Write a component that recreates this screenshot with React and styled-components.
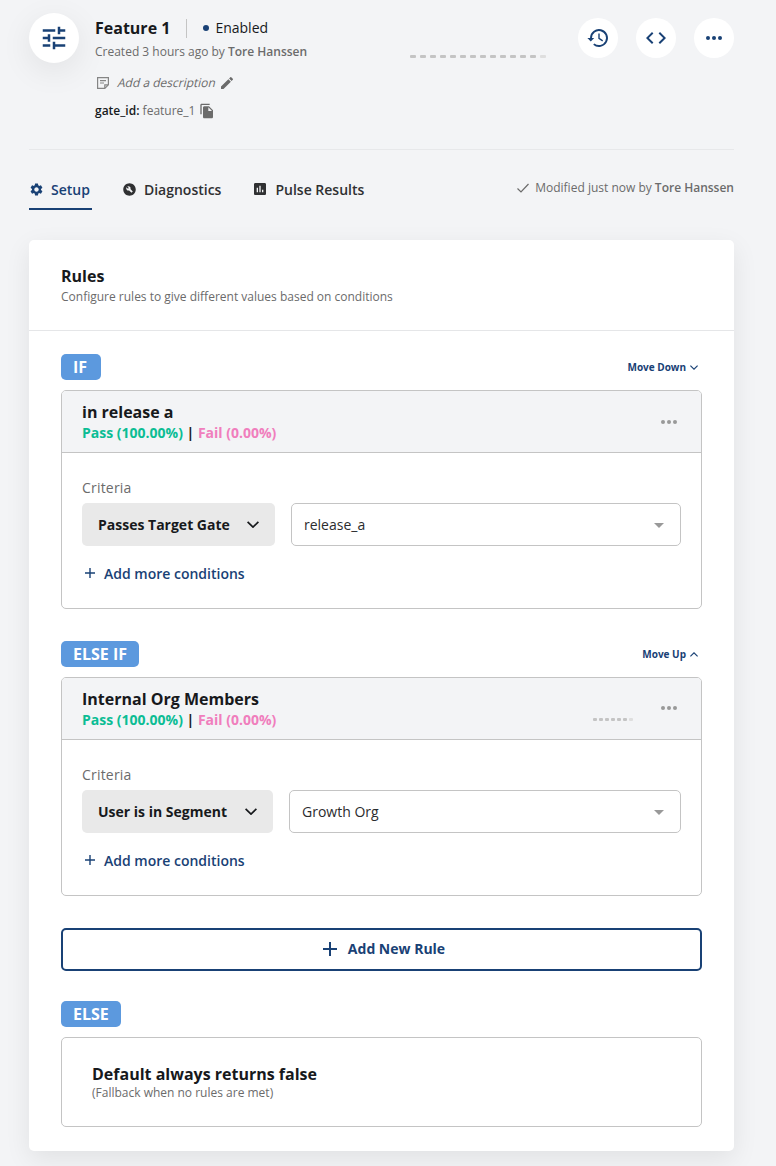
import React from 'react'
import styled, { createGlobalStyle } from 'styled-components'
import {
  MdTune,
  MdCode,
  MdEdit,
  MdFileCopy,
  MdSettings,
  MdBuildCircle,
  MdInsertChart,
  MdArrowDropDown,
} from 'react-icons/md'

const navy = '#194175'
const ink = '#17191c'
const muted = '#6b6b6b'
const line = '#c4c4c4'

const GlobalStyle = createGlobalStyle`
  * {
    box-sizing: border-box;
  }

  body {
    margin: 0;
    background: #f3f4f6;
    color: ${ink};
    font-family: 'Open Sans', sans-serif;
    font-size: 14px;
  }

  button {
    border: 0;
    padding: 0;
    background: none;
    color: inherit;
    font: inherit;
  }

  svg {
    display: block;
    flex: none;
  }
`

const Page = styled.main`
  height: 1166px;
  overflow: hidden;
  padding: 13px 42px 0 29px;
`

const Header = styled.header`
  display: flex;
  align-items: flex-start;
  height: 137px;
  border-bottom: 1px solid #e7e8ea;
`

const Avatar = styled.div`
  display: flex;
  align-items: center;
  justify-content: center;
  width: 50px;
  height: 50px;
  margin-right: 16px;
  border-radius: 50%;
  background: #fff;
  color: ${navy};
  box-shadow: 0 8px 32px rgba(0, 0, 0, 0.08);
`

const Info = styled.div`
  display: flex;
  flex-direction: column;
  flex: 1;
  padding-top: 3px;
`

const TitleRow = styled.div`
  display: flex;
  align-items: center;
  height: 24px;
`

const Title = styled.h1`
  margin: 0;
  font-size: 16px;
  font-weight: 700;
  line-height: 24px;
`

const Status = styled.div`
  display: flex;
  align-items: center;
  height: 19px;
  margin-left: 16px;
  padding-left: 16px;
  border-left: 1px solid ${line};
  line-height: 18px;

  &::before {
    content: '';
    width: 6px;
    height: 6px;
    margin-right: 6px;
    border-radius: 50%;
    background: ${navy};
  }
`

const Meta = styled.div`
  display: flex;
  align-items: center;
  height: 20px;
  margin-top: ${({ $top }) => $top || 0}px;
  padding-left: ${({ $indent }) => $indent || 0}px;
  color: ${muted};
  font-size: 12px;
  line-height: 20px;
  white-space: pre;

  strong {
    font-weight: 600;
  }

  b {
    color: ${ink};
    font-weight: 600;
  }
`

const Description = styled.span`
  margin: 0 3px 0 9px;
  transform: skewX(-14deg);
`

const Dashes = styled.div`
  display: flex;
  gap: ${({ $small }) => ($small ? 2 : 4)}px;
  margin-top: ${({ $small }) => ($small ? 21 : 42)}px;
  margin-right: ${({ $small }) => ($small ? 28 : 32)}px;

  span {
    width: ${({ $small }) => ($small ? 4 : 6)}px;
    height: 3px;
    border-radius: 1px;
    background: ${line};
  }

  span:last-child {
    background: #dedede;
  }
`

const Actions = styled.div`
  display: flex;
  gap: 18px;
  padding-top: 5px;
`

const RoundButton = styled.button`
  display: flex;
  align-items: center;
  justify-content: center;
  width: 40px;
  height: 40px;
  border-radius: 50%;
  background: #fff;
  color: ${navy};
`

const TabBar = styled.nav`
  display: flex;
  height: 60px;
  margin-bottom: 30px;
`

const Tab = styled.button`
  display: flex;
  align-items: center;
  gap: 7px;
  height: 60px;
  margin-right: 29px;
  padding: 20px 2px 0 0;
  border-bottom: 2px solid ${({ $active }) => ($active ? navy : 'transparent')};
  color: ${({ $active }) => ($active ? navy : '#2f3032')};
  font-weight: 600;

  &:first-child {
    margin-right: 30px;
  }
`

const Modified = styled.div`
  display: flex;
  align-items: center;
  gap: 6px;
  height: 20px;
  margin: 28px 0 0 auto;
  color: ${muted};
  font-size: 12px;
  line-height: 20px;

  span {
    height: 20px;
  }

  strong {
    font-weight: 600;
  }
`

const Card = styled.section`
  height: 911px;
  border-radius: 5px;
  background: #fff;
  box-shadow: 0 8px 26px rgba(0, 0, 0, 0.08);
`

const CardHeader = styled.div`
  height: 91px;
  padding: 24px 32px 0;
  border-bottom: 1px solid #e5e6e8;
`

const Heading = styled.h2`
  margin: 0;
  font-size: 16px;
  font-weight: 700;
  line-height: 24px;
`

const Hint = styled.p`
  margin: 0;
  color: ${muted};
  font-size: 12px;
  line-height: ${({ $tight }) => ($tight ? 14 : 18)}px;
`

const CardBody = styled.div`
  padding: 23px 32px 24px;
`

const Rule = styled.div`
  margin-bottom: 32px;
`

const RuleTop = styled.div`
  display: flex;
  align-items: center;
  justify-content: space-between;
  height: 26px;
  margin-bottom: 10px;
`

const Badge = styled.span`
  min-width: 40px;
  padding: 0 12px;
  border-radius: 5px;
  background: #5c99de;
  color: #fff;
  font-size: 16px;
  font-weight: 700;
  line-height: 26px;
`

const MoveButton = styled.button`
  display: flex;
  align-items: center;
  gap: 4px;
  padding-right: 4px;
  color: ${navy};
  font-size: 10px;
  font-weight: 700;
`

const Box = styled.div`
  height: ${({ $height }) => $height}px;
  padding: ${({ $padding }) => $padding || 0};
  border: 1px solid ${line};
  border-radius: 5px;
  overflow: hidden;
`

const RuleHeader = styled.div`
  display: flex;
  align-items: center;
  height: 62px;
  padding: 0 24px 0 20px;
  border-bottom: 1px solid ${line};
  background: #f3f4f6;
`

const RuleText = styled.div`
  flex: 1;
`

const RuleName = styled.h3`
  margin: 0;
  font-size: 16px;
  font-weight: 700;
  line-height: 22px;
`

const Rates = styled.div`
  font-size: 14px;
  font-weight: 700;
  line-height: 20px;
`

const Pass = styled.span`
  color: #0bbd94;
`

const Fail = styled.span`
  color: #f07ebd;
`

const More = styled.button`
  color: #999;
  padding-bottom: ${({ $lift }) => $lift || 0}px;
`

const RuleBody = styled.div`
  padding: 25px 20px 0;
`

const Label = styled.div`
  height: 25px;
  color: ${muted};
  font-weight: 500;
  letter-spacing: 0.2px;
  line-height: 20px;
`

const Fields = styled.div`
  display: flex;
  gap: 16px;
  height: 43px;
`

const TypeButton = styled.button`
  display: flex;
  align-items: center;
  justify-content: space-between;
  width: ${({ $width }) => $width}px;
  padding: 0 16px;
  border-radius: 5px;
  background: #e9e9e9;
  font-weight: 700;
`

const Select = styled.div`
  display: flex;
  align-items: center;
  justify-content: space-between;
  flex: 1;
  padding: 0 9px 0 12px;
  border: 1px solid ${line};
  border-radius: 5px;
  color: #2b2c2e;

  svg {
    color: #999;
  }
`

const AddCondition = styled.button`
  display: flex;
  align-items: center;
  gap: 9px;
  height: 20px;
  margin-top: 17px;
  padding-left: 3px;
  color: ${navy};
  font-weight: 600;
`

const AddRule = styled.button`
  display: flex;
  align-items: center;
  justify-content: center;
  gap: 11px;
  width: 100%;
  height: 43px;
  margin-bottom: 30px;
  padding: 0 0 2px 5px;
  border: 2px solid ${navy};
  border-radius: 5px;
  color: ${navy};
  font-weight: 700;
`

const Dots = () => (
  <svg width="16" height="4" viewBox="0 0 16 4" fill="currentColor">
    <circle cx="2" cy="2" r="2" />
    <circle cx="8" cy="2" r="2" />
    <circle cx="14" cy="2" r="2" />
  </svg>
)

const Chevron = ({ size = 8, up = false }) => (
  <svg
    width={size}
    height={size / 2 + 1}
    viewBox="0 0 12 7"
    fill="none"
    stroke="currentColor"
    strokeWidth="1.7"
  >
    <path d={up ? 'M.6 6.2 6 .9l5.4 5.3' : 'M.6.8 6 6.1 11.4.8'} />
  </svg>
)

const Plus = ({ size, weight }) => (
  <svg width={size} height={size} viewBox={`0 0 ${size} ${size}`} stroke="currentColor" strokeWidth={weight}>
    <path d={`M${size / 2} 0v${size}M0 ${size / 2}h${size}`} />
  </svg>
)

const HistoryIcon = () => (
  <svg width="22" height="20" viewBox="0 0 22 20" fill="none" stroke="currentColor">
    <path d="M4 10.5V10a8 8 0 1 1 2.8 6.1" strokeWidth="1.9" />
    <path d="M.4 10h6.8L3.8 13.6z" fill="currentColor" stroke="none" />
    <path d="M12 5.6v4.8l3.7 2.4" strokeWidth="1.4" />
  </svg>
)

const NoteIcon = () => (
  <svg width="12" height="12" viewBox="0 0 12 12" fill="none" stroke="#858585" strokeWidth="1.2">
    <path d="M.6.6h10.8v7.2l-3.6 3.6H.6zM11.4 7.8H7.8v3.6M3 3.6h6M3 6h4" />
  </svg>
)

const CheckIcon = () => (
  <svg width="12" height="10" viewBox="0 0 12 10" fill="none" stroke="currentColor" strokeWidth="1.2">
    <path d="M.5 5.5 4 9l7.5-8" />
  </svg>
)

const DashLine = ({ count, small }) => (
  <Dashes $small={small}>
    {Array.from({ length: count }, (_, i) => (
      <span key={i} />
    ))}
  </Dashes>
)

const rules = [
  {
    badge: 'IF',
    move: 'Move Down',
    name: 'in release a',
    type: 'Passes Target Gate',
    typeWidth: 193,
    value: 'release_a',
  },
  {
    badge: 'ELSE IF',
    move: 'Move Up',
    up: true,
    name: 'Internal Org Members',
    type: 'User is in Segment',
    typeWidth: 191,
    value: 'Growth Org',
    dashes: 7,
  },
]

const RuleBlock = ({ rule }) => (
  <Rule>
    <RuleTop>
      <Badge>{rule.badge}</Badge>
      <MoveButton>
        {rule.move}
        <Chevron up={rule.up} />
      </MoveButton>
    </RuleTop>
    <Box $height={219}>
      <RuleHeader>
        <RuleText>
          <RuleName>{rule.name}</RuleName>
          <Rates>
            <Pass>Pass (100.00%)</Pass> | <Fail>Fail (0.00%)</Fail>
          </Rates>
        </RuleText>
        {rule.dashes ? <DashLine count={rule.dashes} small /> : null}
        <More $lift={rule.dashes ? 2 : 0}>
          <Dots />
        </More>
      </RuleHeader>
      <RuleBody>
        <Label>Criteria</Label>
        <Fields>
          <TypeButton $width={rule.typeWidth}>
            {rule.type}
            <Chevron size={12} />
          </TypeButton>
          <Select>
            {rule.value}
            <MdArrowDropDown size={24} />
          </Select>
        </Fields>
        <AddCondition>
          <Plus size={10} weight={1.4} />
          Add more conditions
        </AddCondition>
      </RuleBody>
    </Box>
  </Rule>
)

const App = () => (
  <>
    <GlobalStyle />
    <Page>
      <Header>
        <Avatar>
          <MdTune size={30} />
        </Avatar>
        <Info>
          <TitleRow>
            <Title>Feature 1</Title>
            <Status>Enabled</Status>
          </TitleRow>
          <Meta $top={2}>
            Created 3 hours ago by <strong>Tore Hanssen</strong>
          </Meta>
          <Meta $top={11} $indent={2}>
            <NoteIcon />
            <Description>Add a description</Description>
            <MdEdit size={16} />
          </Meta>
          <Meta $top={8}>
            <b>gate_id:</b> feature_1 <MdFileCopy size={16} />
          </Meta>
        </Info>
        <DashLine count={14} />
        <Actions>
          <RoundButton>
            <HistoryIcon />
          </RoundButton>
          <RoundButton>
            <MdCode size={24} />
          </RoundButton>
          <RoundButton>
            <Dots />
          </RoundButton>
        </Actions>
      </Header>
      <TabBar>
        <Tab $active>
          <MdSettings size={15} />
          Setup
        </Tab>
        <Tab>
          <MdBuildCircle size={15} />
          Diagnostics
        </Tab>
        <Tab>
          <MdInsertChart size={16} />
          Pulse Results
        </Tab>
        <Modified>
          <CheckIcon />
          <span>
            Modified just now by <strong>Tore Hanssen</strong>
          </span>
        </Modified>
      </TabBar>
      <Card>
        <CardHeader>
          <Heading>Rules</Heading>
          <Hint>Configure rules to give different values based on conditions</Hint>
        </CardHeader>
        <CardBody>
          {rules.map((rule) => (
            <RuleBlock key={rule.badge} rule={rule} />
          ))}
          <AddRule>
            <Plus size={14} weight={2} />
            Add New Rule
          </AddRule>
          <RuleTop>
            <Badge>ELSE</Badge>
          </RuleTop>
          <Box $height={90} $padding="24px 30px 0">
            <Heading>Default always returns false</Heading>
            <Hint $tight>(Fallback when no rules are met)</Hint>
          </Box>
        </CardBody>
      </Card>
    </Page>
  </>
)

export default App
